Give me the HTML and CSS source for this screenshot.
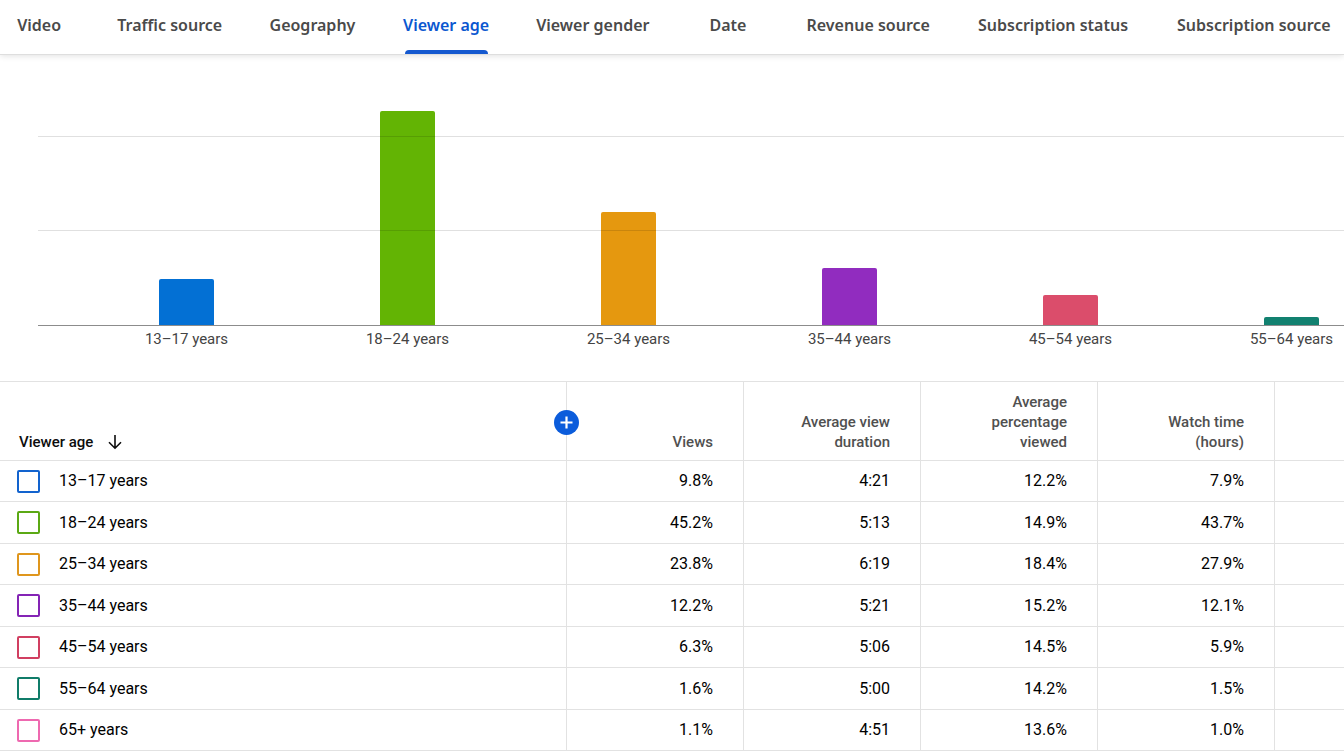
FILE: index.html
```html
<!DOCTYPE html>
<html lang="en">
<head>
<meta charset="utf-8">
<meta name="viewport" content="width=device-width, initial-scale=1">
<title>Viewer age</title>
<link rel="stylesheet" href="styles.css">
</head>
<body>
<nav class="tabs" role="tablist" aria-label="Report dimension">
  <button class="tab" role="tab" type="button">Video</button>
  <button class="tab" role="tab" type="button">Traffic source</button>
  <button class="tab" role="tab" type="button">Geography</button>
  <button class="tab tab-active" role="tab" type="button" aria-selected="true">Viewer age</button>
  <button class="tab" role="tab" type="button">Viewer gender</button>
  <button class="tab" role="tab" type="button">Date</button>
  <button class="tab" role="tab" type="button">Revenue source</button>
  <button class="tab" role="tab" type="button">Subscription status</button>
  <button class="tab" role="tab" type="button">Subscription source</button>
</nav>
<main>
  <section class="chart" aria-label="Views by viewer age">
    <div class="plot">
      <div class="bars">
        <div class="bar blue" style="height:19.6%"></div>
        <div class="bar green" style="height:91%"></div>
        <div class="bar orange" style="height:47.9%"></div>
        <div class="bar purple" style="height:24.4%"></div>
        <div class="bar red" style="height:12.6%"></div>
        <div class="bar teal" style="height:3.4%"></div>
      </div>
      <div class="gridline" style="bottom:80%"></div>
      <div class="gridline" style="bottom:40%"></div>
    </div>
    <div class="axis-labels">
      <span>13–17 years</span><span>18–24 years</span><span>25–34 years</span><span>35–44 years</span><span>45–54 years</span><span>55–64 years</span>
    </div>
  </section>
  <table class="report">
    <colgroup><col><col class="metric"><col class="metric"><col class="metric"><col class="metric"><col class="rest"></colgroup>
    <thead>
      <tr>
        <th class="dimension" scope="col">
          <button class="sort" type="button">Viewer age
            <svg class="arrow" viewBox="0 0 14 16" aria-hidden="true"><path d="M7 1v13M1 8.200l6 6 6-6" fill="none" stroke="currentColor" stroke-width="1.600"/></svg>
          </button>
        </th>
        <th scope="col">
          <button class="add" type="button" aria-label="Add metric"><svg viewBox="0 0 25 25" aria-hidden="true"><path d="M12.500 6.500v12M6.500 12.500h12" stroke="#fff" stroke-width="2.200"/></svg></button>
          Views
        </th>
        <th scope="col">Average view duration</th>
        <th scope="col">Average percentage viewed</th>
        <th scope="col">Watch time (hours)</th>
        <td></td>
      </tr>
    </thead>
    <tbody>
      <tr><td><label class="age"><input class="box blue" type="checkbox">13–17 years</label></td><td>9.8%</td><td>4:21</td><td>12.2%</td><td>7.9%</td><td></td></tr>
      <tr><td><label class="age"><input class="box green" type="checkbox">18–24 years</label></td><td>45.2%</td><td>5:13</td><td>14.9%</td><td>43.7%</td><td></td></tr>
      <tr><td><label class="age"><input class="box orange" type="checkbox">25–34 years</label></td><td>23.8%</td><td>6:19</td><td>18.4%</td><td>27.9%</td><td></td></tr>
      <tr><td><label class="age"><input class="box purple" type="checkbox">35–44 years</label></td><td>12.2%</td><td>5:21</td><td>15.2%</td><td>12.1%</td><td></td></tr>
      <tr><td><label class="age"><input class="box red" type="checkbox">45–54 years</label></td><td>6.3%</td><td>5:06</td><td>14.5%</td><td>5.9%</td><td></td></tr>
      <tr><td><label class="age"><input class="box teal" type="checkbox">55–64 years</label></td><td>1.6%</td><td>5:00</td><td>14.2%</td><td>1.5%</td><td></td></tr>
      <tr><td><label class="age"><input class="box pink" type="checkbox">65+ years</label></td><td>1.1%</td><td>4:51</td><td>13.6%</td><td>1.0%</td><td></td></tr>
    </tbody>
  </table>
</main>
</body>
</html>
```
FILE: styles.css
```css
* { box-sizing: border-box; }

body {
  margin: 0;
  background: #fff;
  color: #0d0d0d;
  font: 16px/20px Roboto, sans-serif;
  overflow-x: hidden;
}

button {
  border: 0;
  padding: 0;
  background: none;
  font: inherit;
  color: inherit;
  cursor: pointer;
}

/* Dimension tabs */
.tabs {
  display: grid;
  grid-template-columns: 60fr 101fr 84fr 83fr 110fr 60fr 120fr 149fr 152fr;
  column-gap: 50px;
  height: 55px;
  padding: 0 14px 0 9px;
  border-bottom: 1px solid #dedede;
  box-shadow: 0 1px 6px rgba(0, 0, 0, 0.12);
}

.tab {
  position: relative;
  display: flex;
  align-items: center;
  justify-content: center;
  min-width: 0;
  padding-bottom: 5px;
  font: 600 16px/20px "Noto Sans", sans-serif;
  color: #4a4a4a;
  white-space: nowrap;
}

.tab-active { color: #0b57d0; }

.tab-active::after {
  content: "";
  position: absolute;
  inset: auto 0 0;
  height: 4px;
  border-radius: 4px 4px 0 0;
  background: #1458cf;
}

/* Palette */
.blue { --tone: #0370d4; --edge: #1263ce; }
.green { --tone: #63b404; --edge: #5ba914; }
.orange { --tone: #e5980f; --edge: #df961d; }
.purple { --tone: #912cbf; --edge: #8424b5; }
.red { --tone: #db4d6b; --edge: #d13f61; }
.teal { --tone: #128170; --edge: #107c69; }
.pink { --edge: #ee69b0; }

/* Bar chart */
.chart {
  padding: 35px 0 32px 38px;
  overflow: hidden;
}

.plot {
  position: relative;
  height: 236px;
  border-bottom: 1px solid #8c8c8c;
}

.bars,
.axis-labels {
  display: grid;
  grid-template-columns: repeat(6, 1fr);
  margin: 0 -58px 0 38px;
  justify-items: center;
}

.bars {
  height: 100%;
  align-items: end;
}

.bar {
  width: 55px;
  border-radius: 2px 2px 0 0;
  background: var(--tone);
}

.gridline {
  position: absolute;
  left: 0;
  right: 0;
  height: 1px;
  background: rgba(0, 0, 0, 0.12);
}

.axis-labels {
  padding-top: 3px;
  font-size: 15px;
  color: #444;
}

/* Report table */
.report {
  width: 100%;
  table-layout: fixed;
  border-collapse: separate;
  border-spacing: 0;
  border-top: 1px solid #e2e2e2;
}

.metric { width: 177px; }
.rest { width: 69px; }

.report th,
.report td {
  height: 41px;
  padding: 0 30px 0 0;
  border-right: 1px solid #e2e2e2;
  border-bottom: 1px solid #e2e2e2;
  text-align: right;
}

.report td { color: #000; }
.report tbody tr:nth-child(even) td { height: 42px; }
.report th:first-child,
.report td:first-child { text-align: left; }
.report td:last-child {
  padding: 0;
  border-right: 0;
}

.report th {
  position: relative;
  height: 79px;
  padding: 10px 30px 8px 48px;
  vertical-align: bottom;
  font-size: 15px;
  font-weight: 500;
  color: #505050;
}

.report .dimension {
  padding-left: 19px;
  color: #0d0d0d;
}

.sort {
  display: flex;
  align-items: center;
  gap: 15px;
}

.arrow {
  width: 14px;
  height: 16px;
}

.add {
  position: absolute;
  top: 28px;
  left: -13px;
  z-index: 1;
  width: 25px;
  height: 25px;
  border-radius: 50%;
  background: #0b5cdb;
}

.add svg { display: block; }

.age {
  display: flex;
  align-items: center;
  gap: 19px;
  padding-left: 17px;
}

.box {
  appearance: none;
  width: 23px;
  height: 23px;
  margin: 0;
  border: 2px solid var(--edge);
  border-radius: 2px;
}

.box:checked { background: var(--edge); }
```
